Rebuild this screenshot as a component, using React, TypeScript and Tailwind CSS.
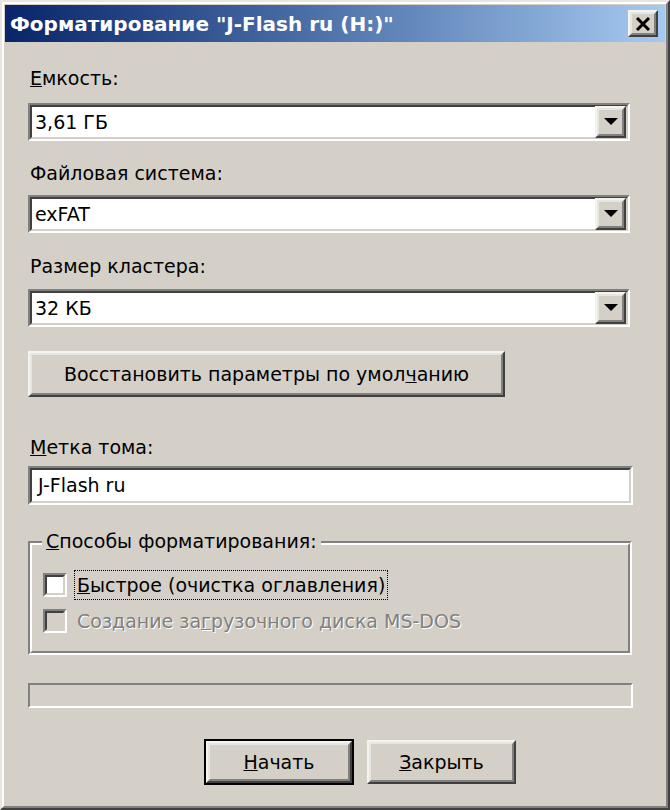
import React from "react";

const FONT = { fontFamily: '"DejaVu Sans", Verdana, sans-serif' };

function Sunken({ className = "", children }: { className?: string; children?: React.ReactNode }) {
  return (
    <div className={"border-2 border-t-[#808080] border-l-[#808080] border-r-white border-b-white " + className}>
      <div className="h-full w-full border-2 border-t-[#404040] border-l-[#404040] border-r-[#d4d0c8] border-b-[#d4d0c8]">
        {children}
      </div>
    </div>
  );
}

function Raised({ className = "", children }: { className?: string; children?: React.ReactNode }) {
  return (
    <div className={"border-2 border-t-[#f4f3ee] border-l-[#f4f3ee] border-r-[#404040] border-b-[#404040] " + className}>
      <div className="flex h-full w-full items-center justify-center border-2 border-t-[#e8e6e0] border-l-[#e8e6e0] border-r-[#808080] border-b-[#808080] bg-[#d4d0c8]">
        {children}
      </div>
    </div>
  );
}

function Combo({ value }: { value: string }) {
  return (
    <Sunken className="h-[38px] w-[602px]">
      <div className="flex h-full items-center bg-white">
        <span className="flex-1 pl-[3px] text-[19px] text-black">{value}</span>
        <Raised className="h-[32px] w-[31px]">
          <svg width="14" height="8" viewBox="0 0 14 8">
            <polygon points="0,0 14,0 7,7" fill="#000" />
          </svg>
        </Raised>
      </div>
    </Sunken>
  );
}

export default function App() {
  return (
    <div style={FONT} className="h-[810px] w-[670px] bg-[#d4d0c8]">
      <div className="h-full w-full border-2 border-t-[#e8e6e0] border-l-[#e8e6e0] border-r-[#404040] border-b-[#404040]">
        <div className="flex h-full w-full flex-col border-2 border-t-white border-l-white border-r-[#808080] border-b-[#808080] bg-[#d4d0c8] p-px">
          {/* Title bar */}
          <div className="flex h-[37px] items-center bg-gradient-to-r from-[#0a246a] to-[#a6caf0] pl-[5px] pr-[7px]">
            <span className="flex-1 text-[20px] font-bold text-white">
              Форматирование "J-Flash ru (H:)"
            </span>
            <Raised className="h-[27px] w-[30px]">
              <svg width="16" height="14" viewBox="0 0 16 14">
                <path d="M2 1 L14 13 M14 1 L2 13" stroke="#000" strokeWidth="3" />
              </svg>
            </Raised>
          </div>

          {/* Content */}
          <div className="flex flex-col px-[23px]">
            <div className="mt-[25px] h-[22px] pl-[2px] text-[19px] leading-[22px]">
              <u>Е</u>мкость:
            </div>
            <div className="mt-[14px]">
              <Combo value="3,61 ГБ" />
            </div>
            <div className="mt-[21px] h-[22px] pl-[2px] text-[19px] leading-[22px]">Файловая система:</div>
            <div className="mt-[11px]">
              <Combo value="exFAT" />
            </div>
            <div className="mt-[22px] h-[22px] pl-[2px] text-[19px] leading-[22px]">Размер кластера:</div>
            <div className="mt-[12px]">
              <Combo value="32 КБ" />
            </div>
            <div className="mt-[24px]">
              <Raised className="h-[46px] w-[477px]">
                <span className="text-[19px]">
                  Восстановить параметры по умол<u>ч</u>анию
                </span>
              </Raised>
            </div>
            <div className="mt-[39px] h-[22px] pl-[2px] text-[19px] leading-[22px]">
              <u>М</u>етка тома:
            </div>
            <div className="mt-[8px]">
              <Sunken className="h-[39px] w-[605px]">
                <div className="flex h-full items-center bg-white pl-[6px] text-[19px]">J-Flash ru</div>
              </Sunken>
            </div>

            {/* Group box */}
            <div className="relative mt-[36px] h-[114px] w-[604px] border-2 border-t-[#808080] border-l-[#808080] border-r-white border-b-white">
              <div className="h-full w-full border-2 border-t-white border-l-white border-r-[#808080] border-b-[#808080]">
                <div className="absolute left-[12px] top-[-13px] bg-[#d4d0c8] px-[4px] text-[19px] leading-[22px]">
                  <u>С</u>пособы форматирования:
                </div>
                <div className="flex flex-col pl-[11px] pt-[25px]">
                  <div className="flex items-center">
                    <Sunken className="h-[24px] w-[24px]">
                      <div className="h-full w-full bg-white" />
                    </Sunken>
                    <div className="ml-[7px] border border-dotted border-black px-[2px] text-[19px] leading-[28px]">
                      <u>Б</u>ыстрое (очистка оглавления)
                    </div>
                  </div>
                  <div className="mt-[8px] flex items-center">
                    <Sunken className="h-[24px] w-[24px]">
                      <div className="h-full w-full bg-[#d4d0c8]" />
                    </Sunken>
                    <div
                      className="ml-[10px] text-[19px] leading-[26px] text-[#808080]"
                      style={{ textShadow: "1px 1px 0 #ffffff" }}
                    >
                      Создание за<u>г</u>рузочного диска MS-DOS
                    </div>
                  </div>
                </div>
              </div>
            </div>

            {/* Progress bar */}
            <div className="mt-[28px] h-[25px] w-[605px] border-2 border-t-[#808080] border-l-[#808080] border-r-white border-b-white" />

            {/* Buttons */}
            <div className="mt-[31px] flex pl-[176px]">
              <div className="h-[46px] w-[150px] border-2 border-black">
                <Raised className="h-full w-full">
                  <span className="text-[19px]">
                    <u>Н</u>ачать
                  </span>
                </Raised>
              </div>
              <Raised className="ml-[13px] mt-px h-[44px] w-[149px]">
                <span className="text-[19px]">
                  <u>З</u>акрыть
                </span>
              </Raised>
            </div>
          </div>
        </div>
      </div>
    </div>
  );
}
